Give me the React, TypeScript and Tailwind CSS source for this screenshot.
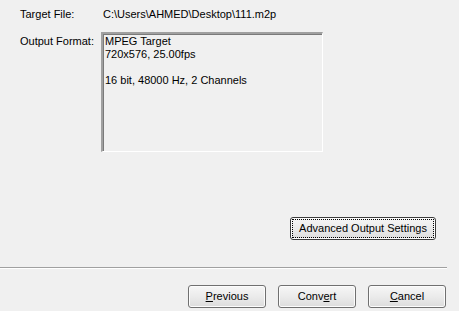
const font = "font-['Liberation_Sans',Arial,sans-serif]";

function Btn({ children, w = "w-[78px]", def = false }: { children: React.ReactNode; w?: string; def?: boolean }) {
  return (
    <button
      className={`${w} h-[23px] rounded-[3px] border ${def ? "border-[#3c3c3c]" : "border-[#707070]"} bg-gradient-to-b from-[#f6f6f6] via-[#ebebeb] to-[#dcdcdc] p-[2px] text-[11px] leading-[13px] text-black shadow-[inset_0_0_0_1px_#fcfcfc]`}
    >
      <span className={`flex h-full w-full items-center justify-center ${def ? "outline outline-1 outline-dotted outline-black -outline-offset-0" : ""}`}>
        {children}
      </span>
    </button>
  );
}

export default function App() {
  return (
    <div className={`${font} flex h-[311px] w-[459px] flex-col bg-[#f0f0f0] text-[11px] leading-[13px] text-black`}>
      <div className="flex pl-[20px] pt-[8px]">
        <div className="w-[83px]">Target File:</div>
        <div>C:\Users\AHMED\Desktop\111.m2p</div>
      </div>

      <div className="mt-[11px] flex pl-[20px]">
        <div className="w-[81px] pt-[3px]">Output Format:</div>
        <div className="h-[120px] w-[222px] border-l-2 border-t-2 border-b border-r border-l-[#a0a0a0] border-t-[#a0a0a0] border-b-white border-r-white pl-[2px] pt-[1px] shadow-[inset_1px_1px_0_#7a7a7a]">
          <div>MPEG Target</div>
          <div>720x576, 25.00fps</div>
          <div className="h-[13px]" />
          <div>16 bit, 48000 Hz, 2 Channels</div>
        </div>
      </div>

      <div className="mt-[65px] flex justify-end pr-[23px]">
        <Btn w="w-[146px]" def>
          Advanced Output Settings
        </Btn>
      </div>

      <div className="mt-[27px] h-[2px] w-[447px] border-t border-b border-t-[#a0a0a0] border-b-white" />

      <div className="mt-[16px] flex justify-end gap-[12px] pr-[13px]">
        <Btn>
          <span><u>P</u>revious</span>
        </Btn>
        <Btn>
          <span>Conv<u>e</u>rt</span>
        </Btn>
        <Btn>
          <span><u>C</u>ancel</span>
        </Btn>
      </div>
    </div>
  );
}
